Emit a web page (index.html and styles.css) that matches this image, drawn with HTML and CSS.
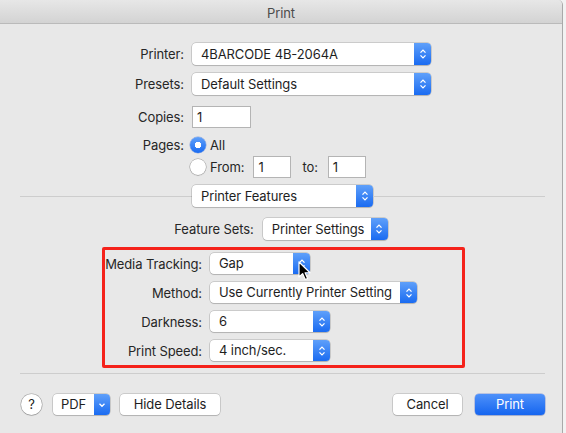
FILE: index.html
```html
<!DOCTYPE html>
<html>
<head>
<meta charset="utf-8">
<link rel="stylesheet" href="styles.css">
</head>
<body>
<div class="window">
  <div class="titlebar">Print</div>
  <div class="content">
    <div class="row r-printer">
      <span class="label">Printer:</span>
      <div class="popup w-printer"><span class="val">4BARCODE 4B-2064A</span><span class="arrows"><svg width="8" height="12" viewBox="0 0 8 12"><path d="M1.5 4.6L4 2.1L6.5 4.6M1.5 7.4L4 9.9L6.5 7.4" fill="none" stroke="#fff" stroke-width="1.3"/></svg></span></div>
    </div>
    <div class="row r-presets">
      <span class="label">Presets:</span>
      <div class="popup w-printer"><span class="val">Default Settings</span><span class="arrows"><svg width="8" height="12" viewBox="0 0 8 12"><path d="M1.5 4.6L4 2.1L6.5 4.6M1.5 7.4L4 9.9L6.5 7.4" fill="none" stroke="#fff" stroke-width="1.3"/></svg></span></div>
    </div>
    <div class="row r-copies">
      <span class="label">Copies:</span>
      <div class="field w-copies">1</div>
    </div>
    <div class="row r-pages">
      <span class="label lh20">Pages:</span>
      <div class="radios">
        <div class="radio-line first"><span class="radio on"></span><span>All</span></div>
        <div class="radio-line second"><span class="radio"></span><span class="from">From:</span><div class="field w-page">1</div><span class="to">to:</span><div class="field w-page">1</div></div>
      </div>
    </div>
    <div class="divider-row">
      <span class="line"></span>
      <div class="popup w-features"><span class="val">Printer Features</span><span class="arrows"><svg width="8" height="12" viewBox="0 0 8 12"><path d="M1.5 4.6L4 2.1L6.5 4.6M1.5 7.4L4 9.9L6.5 7.4" fill="none" stroke="#fff" stroke-width="1.3"/></svg></span></div>
      <span class="line"></span>
    </div>
    <div class="feature-row">
      <span class="flabel">Feature Sets:</span>
      <div class="popup w-sets"><span class="val">Printer Settings</span><span class="arrows"><svg width="8" height="12" viewBox="0 0 8 12"><path d="M1.5 4.6L4 2.1L6.5 4.6M1.5 7.4L4 9.9L6.5 7.4" fill="none" stroke="#fff" stroke-width="1.3"/></svg></span></div>
    </div>
    <div class="redbox">
      <div class="brow">
        <span class="blabel">Media Tracking:</span>
        <div class="popup w-media"><span class="val">Gap</span><span class="arrows"><svg width="8" height="12" viewBox="0 0 8 12"><path d="M1.5 4.6L4 2.1L6.5 4.6M1.5 7.4L4 9.9L6.5 7.4" fill="none" stroke="#fff" stroke-width="1.3"/></svg></span></div>
      </div>
      <div class="brow">
        <span class="blabel">Method:</span>
        <div class="popup w-method"><span class="val">Use Currently Printer Setting</span><span class="arrows"><svg width="8" height="12" viewBox="0 0 8 12"><path d="M1.5 4.6L4 2.1L6.5 4.6M1.5 7.4L4 9.9L6.5 7.4" fill="none" stroke="#fff" stroke-width="1.3"/></svg></span></div>
      </div>
      <div class="brow">
        <span class="blabel">Darkness:</span>
        <div class="popup w-dark"><span class="val">6</span><span class="arrows"><svg width="8" height="12" viewBox="0 0 8 12"><path d="M1.5 4.6L4 2.1L6.5 4.6M1.5 7.4L4 9.9L6.5 7.4" fill="none" stroke="#fff" stroke-width="1.3"/></svg></span></div>
      </div>
      <div class="brow">
        <span class="blabel">Print Speed:</span>
        <div class="popup w-dark"><span class="val">4 inch/sec.</span><span class="arrows"><svg width="8" height="12" viewBox="0 0 8 12"><path d="M1.5 4.6L4 2.1L6.5 4.6M1.5 7.4L4 9.9L6.5 7.4" fill="none" stroke="#fff" stroke-width="1.3"/></svg></span></div>
      </div>
    </div>
    <div class="bottom-sep"></div>
    <div class="buttons">
      <div class="help">?</div>
      <div class="pdf"><span class="pdf-text">PDF</span><span class="pdf-arrow"><svg width="8" height="6" viewBox="0 0 8 6"><path d="M1.5 1.8L4 4.3L6.5 1.8" fill="none" stroke="#fff" stroke-width="1.3"/></svg></span></div>
      <div class="btn w-hide">Hide Details</div>
      <div class="spacer"></div>
      <div class="btn w-cancel">Cancel</div>
      <div class="btn primary w-print">Print</div>
    </div>
  </div>
  <svg class="cursor" width="13" height="20" viewBox="0 0 13 20"><path d="M1 1L1 16L4.6 12.6L7.2 18.5L9.6 17.5L7.1 11.8L12 11.8Z" fill="#000" stroke="#fff" stroke-width="1.2" stroke-linejoin="round"/></svg>
</div>
</body>
</html>
```
FILE: styles.css
```css
* { box-sizing: border-box; }
html, body { margin: 0; padding: 0; }
body {
  width: 566px;
  height: 433px;
  overflow: hidden;
  background: #f2f2f2;
  font-family: Inter, "Noto Sans", sans-serif;
  font-size: 13px;
  letter-spacing: -0.1px;
  color: #262626;
}
.window {
  position: relative;
  width: 563px;
  height: 433px;
  background: #e8e8e8;
  border-right: 1px solid #a9a9a9;
  border-top-right-radius: 5px;
  overflow: hidden;
}
.titlebar {
  height: 24px;
  line-height: 23px;
  padding-top: 2px;
  text-align: center;
  color: #4b4b4b;
  background: linear-gradient(#e7e7e7, #d3d3d3);
  border-bottom: 1px solid #bababa;
}
.content { display: flex; flex-direction: column; }

.row { display: flex; align-items: center; }
.row .label { width: 184px; text-align: right; margin-right: 8px; flex: none; white-space: nowrap; }
.r-printer { margin-top: 19px; }
.r-presets { margin-top: 8px; }
.r-copies { margin-top: 11px; }
.r-pages { margin-top: 7px; align-items: flex-start; }
.lh20 { line-height: 20px; }

.popup {
  display: flex;
  height: 22px;
  background: #fff;
  border-radius: 4px;
  box-shadow: 0 0 0 0.5px rgba(0,0,0,0.25), 0 1px 1px rgba(0,0,0,0.12);
  overflow: hidden;
  flex: none;
  color: #1e1e1e;
}
.popup .val {
  flex: 1;
  padding-left: 9px;
  line-height: 22px;
  white-space: nowrap;
  overflow: hidden;
}
.popup .arrows {
  width: 17px;
  flex: none;
  background: linear-gradient(#5fa0fa, #1a6bf1);
  display: flex;
  align-items: center;
  justify-content: center;
}
.w-printer { width: 239px; }
.w-features { width: 181px; }
.w-sets { width: 125px; }
.w-media { width: 100px; }
.w-method { width: 207px; }
.w-dark { width: 120px; }

.field {
  height: 22px;
  line-height: 20px;
  padding-left: 4px;
  background: #fff;
  border: 1px solid #b4b4b4;
  color: #1e1e1e;
  flex: none;
}
.w-copies { width: 59px; }
.w-page { width: 38px; }

.radios { display: flex; flex-direction: column; margin-left: -2px; }
.radio-line { display: flex; align-items: center; white-space: nowrap; }
.radio-line.first { height: 20px; }
.radio-line.second { height: 23px; margin-top: 0; }
.radio {
  width: 16px;
  height: 16px;
  border-radius: 50%;
  background: #fff;
  box-shadow: 0 0 0 0.5px rgba(0,0,0,0.35), 0 1px 1px rgba(0,0,0,0.1);
  margin-right: 4px;
  flex: none;
}
.radio.on {
  background: radial-gradient(circle, #fff 0 3px, transparent 3.5px), linear-gradient(#5fa0fa, #1a6bf1);
  box-shadow: 0 0 0 0.5px rgba(0,60,200,0.4);
}
.from { margin-right: 9px; }
.to { margin: 0 10px 0 11px; }

.divider-row { display: flex; align-items: center; margin-top: 7px; padding: 0 17px 0 20px; }
.divider-row .line { flex: 1; height: 1px; background: #cdcdcd; }

.feature-row { display: flex; align-items: center; justify-content: center; margin-top: 11px; }
.flabel { margin-right: 9px; }

.redbox {
  align-self: flex-start;
  margin: 7px 0 0 102px;
  width: 363px;
  border: 3px solid #f5221b;
  border-radius: 2px;
  padding: 3px 0 4px;
  display: flex;
  flex-direction: column;
  gap: 8px;
}
.brow { display: flex; align-items: center; }
.blabel { width: 97px; text-align: right; margin-right: 8px; flex: none; white-space: nowrap; }
.brow .popup { height: 21px; }
.brow .popup .val { line-height: 21px; }

.bottom-sep { height: 1px; background: #cdcdcd; margin: 5px 17px 0 20px; }

.buttons { display: flex; align-items: center; margin-top: 20px; padding: 0 17px 0 21px; }
.help {
  width: 21px;
  height: 21px;
  border-radius: 50%;
  background: #fff;
  box-shadow: 0 0 0 0.5px rgba(0,0,0,0.3), 0 1px 1px rgba(0,0,0,0.12);
  text-align: center;
  line-height: 21px;
  font-size: 13px;
  color: #222;
  margin-right: 11px;
}
.pdf {
  display: flex;
  width: 57px;
  height: 21px;
  border-radius: 4px;
  background: #fff;
  overflow: hidden;
  box-shadow: 0 0 0 0.5px rgba(0,0,0,0.25), 0 1px 1px rgba(0,0,0,0.12);
  margin-right: 10px;
}
.pdf-text { flex: 1; text-align: center; line-height: 21px; color: #1e1e1e; }
.pdf-arrow {
  width: 16px;
  background: linear-gradient(#5fa0fa, #1a6bf1);
  display: flex;
  align-items: center;
  justify-content: center;
}
.btn {
  height: 21px;
  line-height: 21px;
  border-radius: 4px;
  background: #fff;
  text-align: center;
  color: #1e1e1e;
  box-shadow: 0 0 0 0.5px rgba(0,0,0,0.25), 0 1px 1px rgba(0,0,0,0.12);
}
.btn.primary {
  background: linear-gradient(#4e91fa, #1565ef);
  color: #fff;
  box-shadow: 0 0 0 0.5px rgba(0,50,200,0.4), 0 1px 1px rgba(0,0,0,0.12);
}
.w-hide { width: 100px; }
.w-cancel { width: 69px; margin-right: 13px; }
.w-print { width: 70px; }
.spacer { flex: 1; }

.cursor { position: absolute; left: 298px; top: 261px; }
```
